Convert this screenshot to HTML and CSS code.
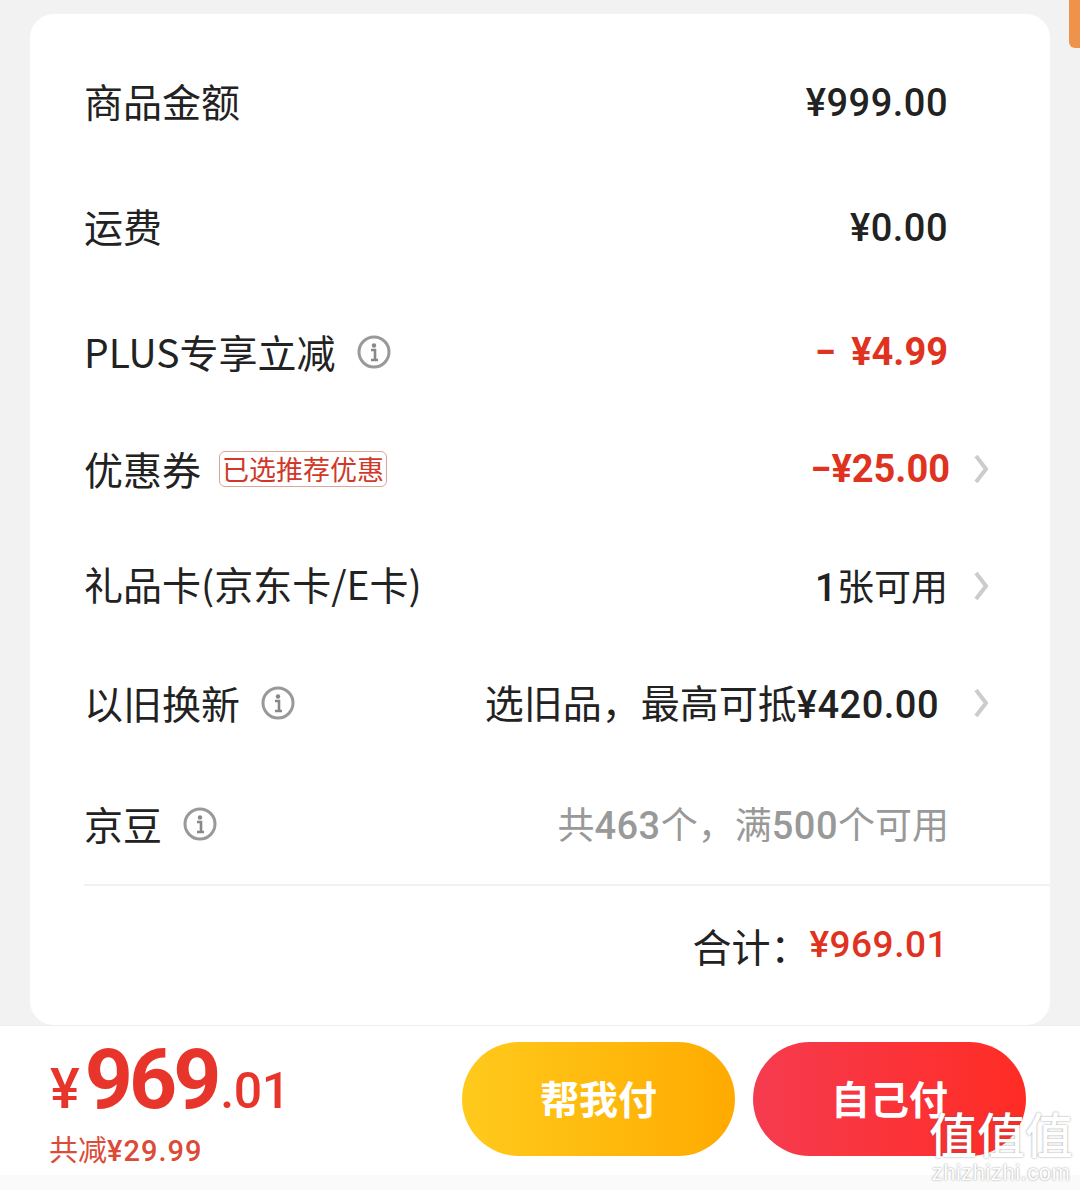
FILE: index.html
```html
<!DOCTYPE html>
<html lang="zh-CN">
<head>
<meta charset="utf-8"/>
<title>订单结算</title>
<link rel="stylesheet" href="styles.css">
</head>
<body>
<div class="scroll-thumb"></div>

<div class="card">
  <div class="row">
    <span class="label up">商品金额</span>
    <span class="value num">¥999.00</span>
  </div>
  <div class="row gap-25">
    <span class="label up">运费</span>
    <span class="value num">¥0.00</span>
  </div>
  <div class="row gap-24">
    <span class="label">PLUS专享立减</span>
    <svg class="info" viewBox="0 0 34 34"><circle cx="17" cy="17" r="15" fill="none" stroke="#999" stroke-width="3"/><circle cx="17" cy="10.5" r="2.2" fill="#888"/><path d="M14 15h4v10M14 25h7" fill="none" stroke="#888" stroke-width="2.6"/></svg>
    <span class="value num red wide">− ¥4.99</span>
  </div>
  <div class="row has-arrow">
    <span class="label">优惠券</span>
    <span class="tag">已选推荐优惠</span>
    <span class="value num red">−¥25.00</span>
    <svg class="arrow arrow-near" viewBox="0 0 14 30"><path d="M2 2l10 13L2 28" fill="none" stroke="#ccc" stroke-width="4"/></svg>
  </div>
  <div class="row has-arrow">
    <span class="label up">礼品卡(京东卡/E卡)</span>
    <span class="value plain small"><b class="num">1</b>张可用</span>
    <svg class="arrow" viewBox="0 0 14 30"><path d="M2 2l10 13L2 28" fill="none" stroke="#ccc" stroke-width="4"/></svg>
  </div>
  <div class="row has-arrow">
    <span class="label">以旧换新</span>
    <svg class="info" viewBox="0 0 34 34"><circle cx="17" cy="17" r="15" fill="none" stroke="#999" stroke-width="3"/><circle cx="17" cy="10.5" r="2.2" fill="#888"/><path d="M14 15h4v10M14 25h7" fill="none" stroke="#888" stroke-width="2.6"/></svg>
    <span class="value plain">选旧品，最高可抵<b class="num">¥420.00</b></span>
    <svg class="arrow arrow-far" viewBox="0 0 14 30"><path d="M2 2l10 13L2 28" fill="none" stroke="#ccc" stroke-width="4"/></svg>
  </div>
  <div class="row gap-21">
    <span class="label">京豆</span>
    <svg class="info" viewBox="0 0 34 34"><circle cx="17" cy="17" r="15" fill="none" stroke="#999" stroke-width="3"/><circle cx="17" cy="10.5" r="2.2" fill="#888"/><path d="M14 15h4v10M14 25h7" fill="none" stroke="#888" stroke-width="2.6"/></svg>
    <span class="value plain small grey">共<b class="num">463</b>个，满<b class="num">500</b>个可用</span>
  </div>
  <div class="total">
    <span class="total-label">合计：</span>
    <span class="num red">¥969.01</span>
  </div>
</div>

<div class="footer">
  <div class="price">
    <div class="price-main"><span class="yen">¥</span><span class="big">969</span><span class="cents">.01</span></div>
    <div class="saved">共减<span class="num">¥29.99</span></div>
  </div>
  <div class="btns">
    <button class="btn btn-yellow">帮我付</button>
    <button class="btn btn-red">自己付</button>
  </div>
</div>
<div class="bottom-strip"></div>

<div class="watermark">
  <div class="wm-mark">值值值</div>
  <div class="wm-url">zhizhizhi.com</div>
</div>
</body>
</html>
```

FILE: styles.css
```css
body {
  margin: 0;
  height: 1190px;
  overflow: hidden;
  background: #f2f2f2;
  font-family: "Noto Sans CJK SC", "Noto Sans", sans-serif;
  color: #222;
}

.scroll-thumb {
  position: absolute;
  top: 0;
  right: 0;
  width: 11px;
  height: 48px;
  background: #f0934a;
  border-radius: 0 0 0 6px;
}

.card {
  box-sizing: border-box;
  margin: 14px 30px 0;
  width: 1020px;
  height: 1011px;
  padding: 39px 0 0 54px;
  background: #fff;
  border-radius: 24px;
}

.row {
  display: flex;
  align-items: center;
  height: 100px;
  margin-top: 17px;
  padding-right: 102px;
}

.row:first-child { margin-top: 0; }
.gap-25 { margin-top: 25px; }
.gap-24 { margin-top: 24px; }
.gap-21 { margin-top: 21px; }

.row.has-arrow {
  padding-right: 62px;
}

.label {
  font-size: 39px;
  line-height: 50px;
  padding-bottom: 2px;
}

.label.up {
  padding-bottom: 6px;
}

.num {
  font-family: Roboto, "Noto Sans", sans-serif;
  font-weight: 500;
}

.value {
  margin-left: auto;
  font-size: 38px;
  line-height: 50px;
  letter-spacing: 0.5px;
}

.plain {
  font-size: 39px;
  letter-spacing: 0;
}

.plain.small {
  font-size: 37px;
  margin-right: -1px;
}

.plain .num {
  font-size: 38px;
  letter-spacing: 0.5px;
}

.wide {
  word-spacing: 6px;
}

.red { color: #e0331f; }
.grey { color: #999; }

.value.red {
  font-weight: 700;
  letter-spacing: 0;
}

.info {
  width: 34px;
  height: 34px;
  margin-left: 21px;
  flex: none;
}

.tag {
  margin-left: 18px;
  padding: 0 2px;
  border: 1px solid #dca597;
  border-radius: 6px;
  font-size: 27px;
  line-height: 34px;
  color: #d0392a;
}

.arrow {
  width: 14px;
  height: 30px;
  margin-left: 27px;
  flex: none;
}

.arrow-near { margin-left: 24px; }
.arrow-far { margin-left: 35px; }

.total {
  display: flex;
  justify-content: flex-end;
  align-items: center;
  height: 118px;
  margin-top: 10px;
  padding-right: 102px;
  border-top: 2px solid #f1f1f1;
  font-size: 37px;
  line-height: 50px;
  letter-spacing: 0.5px;
}

.total-label {
  font-size: 39px;
  letter-spacing: 0;
}

.footer {
  display: flex;
  justify-content: space-between;
  box-sizing: border-box;
  height: 150px;
  padding: 16px 54px 0 50px;
  background: #fff;
  border-top: 1px solid #eee;
}

.bottom-strip {
  height: 15px;
  background: #fafafa;
}

.price-main {
  display: flex;
  align-items: baseline;
  height: 76px;
  line-height: 76px;
  font-family: Roboto, "Noto Sans", sans-serif;
  font-weight: 500;
  color: #e8352b;
}

.yen {
  font-size: 56px;
  margin-right: 5px;
}

.big {
  font-size: 84px;
  font-weight: 700;
  letter-spacing: -4px;
}

.cents {
  margin-left: 3px;
  font-size: 50px;
  letter-spacing: -0.5px;
}

.saved {
  margin-top: 11px;
  margin-left: -1px;
  font-size: 29px;
  line-height: 38px;
  color: #dc4a38;
}

.saved .num {
  letter-spacing: 1px;
}

.btns {
  display: flex;
  gap: 18px;
}

.btn {
  width: 273px;
  height: 114px;
  padding: 0 0 5px;
  border: none;
  border-radius: 57px;
  font-family: inherit;
  font-size: 39px;
  font-weight: 700;
  color: #fff;
}

.btn-yellow {
  background: linear-gradient(90deg, #ffca1c, #ffaa00);
}

.btn-red {
  background: linear-gradient(90deg, #f63b50, #ff2c24);
}

.watermark {
  position: absolute;
  left: 928px;
  top: 1106px;
  width: 146px;
  color: #fff;
  text-align: center;
  text-shadow: 0 0 2px rgba(90, 90, 90, 0.7);
}

.wm-mark {
  font-size: 48px;
  font-weight: 500;
  line-height: 52px;
}

.wm-url {
  margin-top: 3px;
  font-family: "Liberation Sans", sans-serif;
  font-size: 22px;
  line-height: 24px;
  letter-spacing: 0.5px;
}
```
